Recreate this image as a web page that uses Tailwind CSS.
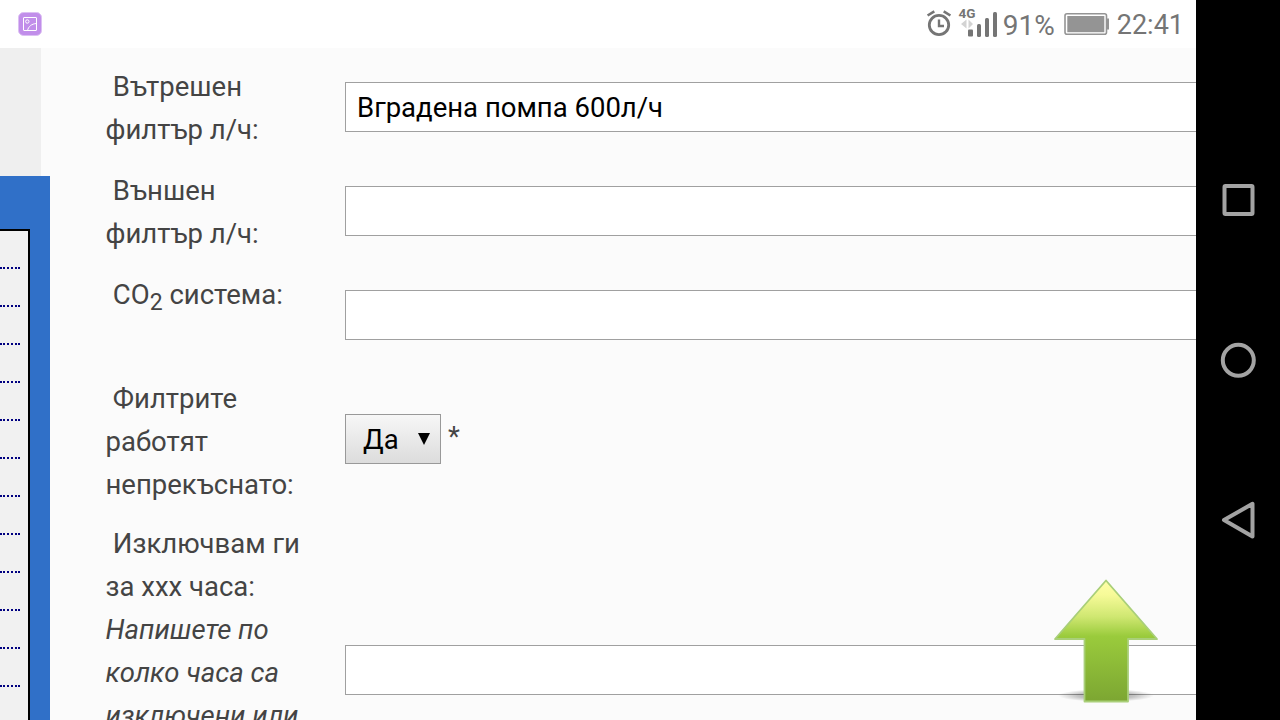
<!DOCTYPE html>
<html lang="bg">
  <head>
    <meta charset="UTF-8" />
    <meta name="viewport" content="width=device-width, initial-scale=1.0" />
    <title>Аквариум</title>
    <script src="https://cdn.jsdelivr.net/npm/@tailwindcss/browser@4"></script>
  </head>
  <body class="flex h-[720px] w-[1280px] overflow-hidden bg-black font-['Roboto','Noto_Sans',sans-serif]">
    <div class="relative flex h-[720px] w-[1196px] flex-col overflow-hidden bg-[#fbfbfb]">
      <!-- Status bar -->
      <header class="flex h-12 shrink-0 items-center justify-between bg-white pl-[18px] pr-3 text-[#757575]">
        <svg class="size-6" viewBox="0 0 24 24" fill="none">
          <rect x=".5" y=".5" width="23" height="23" rx="5" fill="#c18eea" stroke="#dcc0f3" />
          <g stroke="#fff" stroke-width="1">
            <rect x="5.5" y="5.5" width="13" height="13" rx=".5" />
            <circle cx="9.3" cy="9.5" r="1.7" />
            <path d="M9.5 18.5C10.5 14.5 13.5 11.8 18.5 11.5" />
          </g>
        </svg>
        <div class="flex h-12 items-center">
          <svg class="h-12 w-[74px]" viewBox="0 0 74 48" fill="none">
            <g stroke="#757575">
              <circle cx="13" cy="25" r="9.7" stroke-width="2.8" />
              <path d="M13 19.5V26H18" stroke-width="2.4" />
              <path d="M1.6 15.5L8.3 11.4M17.7 11.4L24.4 15.5" stroke-width="2.6" />
            </g>
            <path d="M40.5 19.5V28.5L35 24ZM42.5 19.5V28.5L47 24Z" fill="#d3d3d3" />
            <g fill="#757575">
              <rect x="42" y="29.5" width="5" height="7" rx="1" />
              <rect x="51" y="24" width="4" height="13" rx="1.5" />
              <rect x="59" y="18" width="4" height="19" rx="1.5" />
              <rect x="67" y="12" width="4" height="25" rx="1.5" />
            </g>
            <text x="32.5" y="17.8" fill="#757575" font-size="13.5" font-weight="700">4G</text>
          </svg>
          <span class="w-16 pl-[3px] pt-[3px] text-[28px] leading-none">91%</span>
          <svg class="h-12 w-[46px]" viewBox="0 0 46 48" fill="none">
            <rect x="1" y="13.8" width="41.5" height="20.5" rx="2" stroke="#949494" stroke-width="1.6" />
            <rect x="3.3" y="16" width="37" height="16.2" fill="#949494" />
            <path d="M43 18.5H45V29.5H43Z" fill="#949494" />
          </svg>
          <span class="pl-[7px] pt-[3px] text-[27px] leading-none">22:41</span>
        </div>
      </header>

      <main class="flex min-h-0 flex-1">
        <aside class="flex w-[50px] shrink-0 flex-col">
          <div class="h-32 w-[41px] shrink-0 bg-[#efefef]"></div>
          <div class="flex-1 bg-[#3070c8] pt-[53px]">
            <div class="h-[600px] w-[30px] border-r-2 border-t-2 border-black bg-[#f1f1f1] pr-2">
              <div class="h-[38px] border-b-2 border-dotted border-[#000080]"></div>
              <div class="h-[38px] border-b-2 border-dotted border-[#000080]"></div>
              <div class="h-[38px] border-b-2 border-dotted border-[#000080]"></div>
              <div class="h-[38px] border-b-2 border-dotted border-[#000080]"></div>
              <div class="h-[38px] border-b-2 border-dotted border-[#000080]"></div>
              <div class="h-[38px] border-b-2 border-dotted border-[#000080]"></div>
              <div class="h-[38px] border-b-2 border-dotted border-[#000080]"></div>
              <div class="h-[38px] border-b-2 border-dotted border-[#000080]"></div>
              <div class="h-[38px] border-b-2 border-dotted border-[#000080]"></div>
              <div class="h-[38px] border-b-2 border-dotted border-[#000080]"></div>
              <div class="h-[38px] border-b-2 border-dotted border-[#000080]"></div>
              <div class="h-[38px] border-b-2 border-dotted border-[#000080]"></div>
            </div>
          </div>
        </aside>

        <form class="flex flex-1 flex-col pl-[55px] pt-[17px] text-[27.5px] leading-[43px] text-[#444]">
          <div class="flex h-[104px] shrink-0">
            <label class="w-60 shrink-0 pl-[0.5px] indent-[0.5px]">&nbsp;Вътрешен<br />филтър л/ч:</label>
            <input type="text" value="Вградена помпа 600л/ч" class="mt-[17px] h-[50px] flex-1 border border-r-0 border-[#a0a0a0] bg-white px-[11px] text-black" />
          </div>
          <div class="flex h-[104px] shrink-0">
            <label class="w-60 shrink-0 pl-[0.5px] indent-[0.5px]">&nbsp;Външен<br />филтър л/ч:</label>
            <input type="text" class="mt-[17px] h-[50px] flex-1 border border-r-0 border-[#a0a0a0] bg-white px-[11px] text-black" />
          </div>
          <div class="flex h-[104px] shrink-0">
            <label class="w-60 shrink-0 pl-[0.5px] indent-[0.5px]">&nbsp;CO<sub class="text-[23px]">2</sub> система:</label>
            <input type="text" class="mt-[17px] h-[50px] flex-1 border border-r-0 border-[#a0a0a0] bg-white px-[11px] text-black" />
          </div>
          <div class="flex h-[145px] shrink-0">
            <label class="w-60 shrink-0 pl-[0.5px] indent-[0.5px]">&nbsp;Филтрите<br />работят<br />непрекъснато:</label>
            <button type="button" class="mt-[37px] flex h-[50px] w-24 items-center justify-between border border-[#999] bg-linear-to-b from-[#f7f7f7] to-[#dcdcdc] pl-[17px] pr-[10px] text-black">
              <span>Да</span>
              <svg class="h-3 w-3" viewBox="0 0 12 12"><path d="M0 0H12L6 12Z" /></svg>
            </button>
            <span class="pl-[7px] pt-[38px]">*</span>
          </div>
          <div class="flex h-[260px] shrink-0">
            <label class="w-60 shrink-0 pl-[0.5px] indent-[0.5px]">&nbsp;Изключвам ги<br />за ххх часа:<br /><em>Напишете по<br />колко часа са<br />изключени или</em></label>
            <input type="text" class="mt-[123px] h-[50px] flex-1 border border-r-0 border-[#a0a0a0] bg-white px-[11px] text-black" />
          </div>
        </form>
      </main>

      <!-- Back to top -->
      <svg class="absolute left-[1050px] top-[575px] h-[135px] w-[112px]" viewBox="0 0 112 135">
        <defs>
          <linearGradient id="head" x1="0" y1="0" x2="0" y2="1">
            <stop offset="0" stop-color="#ffffa8" />
            <stop offset=".12" stop-color="#f6fa98" />
            <stop offset=".3" stop-color="#cfe771" />
            <stop offset=".46" stop-color="#9acb3c" />
            <stop offset="1" stop-color="#7ca632" />
          </linearGradient>
          <radialGradient id="shadow">
            <stop offset="0" stop-color="#000" stop-opacity=".4" />
            <stop offset=".6" stop-color="#000" stop-opacity=".22" />
            <stop offset="1" stop-color="#000" stop-opacity="0" />
          </radialGradient>
        </defs>
        <ellipse cx="56" cy="120.5" rx="48" ry="6.5" fill="url(#shadow)" />
        <path d="M56 5.5L107 64H78V126.5H34.5V64H5Z" fill="url(#head)" stroke="#a9cf79" stroke-width="1.8" stroke-linejoin="round" />
      </svg>
    </div>

    <!-- Navigation keys -->
    <nav class="flex w-21 flex-col items-center justify-center gap-[100px] bg-black">
      <svg class="size-[60px]" viewBox="0 0 60 60" fill="none" stroke="#a3a3a3" stroke-width="4">
        <rect x="16.5" y="16" width="28" height="28" rx="1" />
      </svg>
      <svg class="size-[60px]" viewBox="0 0 60 60" fill="none" stroke="#a3a3a3" stroke-width="4">
        <circle cx="30.3" cy="30.3" r="15.5" />
      </svg>
      <svg class="size-[60px]" viewBox="0 0 60 60" fill="none" stroke="#a3a3a3" stroke-width="4" stroke-linejoin="round">
        <path d="M16 30L44.5 13.8V46.5Z" />
      </svg>
    </nav>
  </body>
</html>
